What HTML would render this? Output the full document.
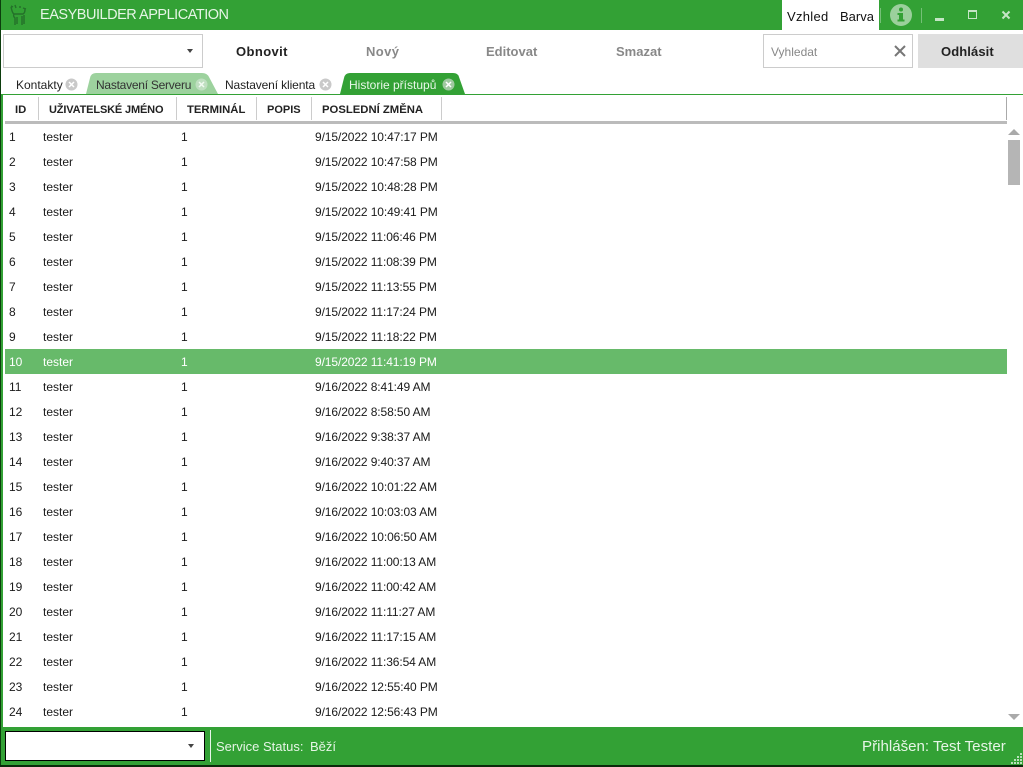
<!DOCTYPE html>
<html><head><meta charset="utf-8"><style>
html,body{margin:0;padding:0;background:#fff}
#a{position:relative;width:1023px;height:767px;overflow:hidden;background:#fff;font-family:"Liberation Sans",sans-serif;font-size:12px;color:#1a1a1a}
.t{position:absolute;white-space:nowrap;line-height:16px}
.b{position:absolute;background:#33a135}
.h{font-weight:bold;font-size:11.3px;color:#222;top:102px}
.btn{font-weight:bold;font-size:13px;top:44px;color:#888}
.s{position:absolute;width:1px;height:23px;top:97px;background:#ccc}
.r{position:absolute;left:5px;width:1002px;height:25px}
.r span{position:absolute;top:5px;line-height:16px;white-space:nowrap}
.c1{left:4px}.c2{left:38px}.c3{left:176px}.c4{left:310px;letter-spacing:-.1px}
.sel{background:#67ba6a;color:#fff}
</style></head><body><div id="a">
<div class="b" style="left:0;top:0;width:1023px;height:30px"></div>
<svg style="position:absolute;left:9px;top:4px" width="20" height="22" viewBox="0 0 20 22" fill="none" stroke="#24702a" stroke-width="1.400"><path d="M2 3c1 3 1 6 3 7h9c2-1 2-3 2-6M5 10c-1 2 0 3 1 4v7M8 13v7M13 12v9M15 11v9M14 4l3 1M2 2l2 1M6 1l1 3M10 3h2"/></svg>
<div class="t" style="left:40px;top:7px;font-size:14.5px;letter-spacing:-.48px;color:#e6f5e6">EASYBUILDER APPLICATION</div>
<div style="position:absolute;left:782px;top:0;width:97px;height:30px;background:#fff"></div>
<div class="t" style="left:787px;top:9px;font-size:13px;letter-spacing:.3px;color:#111">Vzhled</div>
<div class="t" style="left:840px;top:9px;font-size:13px;color:#111">Barva</div>
<div style="position:absolute;left:880px;top:8px;width:1px;height:15px;background:#75c077"></div>
<div style="position:absolute;left:921px;top:8px;width:1px;height:15px;background:#75c077"></div>
<svg style="position:absolute;left:890px;top:4px" width="22" height="22" viewBox="0 0 22 22"><circle cx="11" cy="11" r="11" fill="#9bd09c"/><rect x="9" y="9" width="4" height="8" fill="#33a135"/><rect x="7.500" y="9" width="5" height="2" fill="#33a135"/><rect x="7.500" y="15.500" width="7" height="2" fill="#33a135"/><circle cx="11" cy="5.500" r="2" fill="#33a135"/></svg>
<svg style="position:absolute;left:930px;top:6px" width="90" height="20" viewBox="0 0 90 20" fill="none" stroke="#c5e5c6"><path d="M5.500 12.500h8v2h-8z" fill="#c5e5c6"/><path d="M38.500 4.500h8v8h-8z"/><path d="M38 5h9" stroke-width="2"/><path d="M72.500 5.500l7 7M79.500 5.500l-7 7" stroke-width="2"/></svg>

<div style="position:absolute;left:3px;top:34px;width:198px;height:32px;border:1px solid #ccc"></div>
<div style="position:absolute;left:187px;top:49px;border-left:3px solid transparent;border-right:3px solid transparent;border-top:4px solid #444"></div>
<div class="t btn" style="left:236px;color:#222;letter-spacing:.4px">Obnovit</div>
<div class="t btn" style="left:366px;letter-spacing:.4px">Nový</div>
<div class="t btn" style="left:486px">Editovat</div>
<div class="t btn" style="left:616px">Smazat</div>
<div style="position:absolute;left:763px;top:34px;width:148px;height:32px;border:1px solid #ccc"></div>
<div class="t" style="left:771px;top:44px;color:#888">Vyhledat</div>
<svg style="position:absolute;left:893px;top:44px" width="14" height="14" fill="none" stroke="#777" stroke-width="2"><path d="M2 2l10 10M12 2L2 12"/></svg>
<div style="position:absolute;left:918px;top:34px;width:105px;height:34px;background:#dfdfdf"></div>
<div class="t btn" style="left:941px;color:#222;letter-spacing:.1px">Odhlásit</div>

<svg style="position:absolute;left:0;top:72px" width="480" height="24"><path d="M86 22l4-16q1-5 6-5h106q5 0 7 4l9 17z" fill="#9dd29e"/><path d="M340 22l4-16q1-5 6-5h103q5 0 6 4l6 17z" fill="#33a135"/></svg>
<div class="t" style="left:16px;top:77px;color:#222">Kontakty</div>
<div class="t" style="left:96px;top:77px;letter-spacing:-.25px;color:#333">Nastavení Serveru</div>
<div class="t" style="left:225px;top:77px;letter-spacing:-.12px;color:#222">Nastavení klienta</div>
<div class="t" style="left:349px;top:77px;color:#e9f7e9">Historie přístupů</div>
<svg style="position:absolute;left:65px;top:78px" width="14" height="14" fill="none"><circle cx="6.500" cy="6.500" r="6" fill="#c9c9c9"/><path d="M4 4l5 5M9 4l-5 5" stroke="#fff" stroke-width="1.500"/></svg>
<svg style="position:absolute;left:195px;top:78px" width="14" height="14" fill="none"><circle cx="6.500" cy="6.500" r="6" fill="#bfdfc0"/><path d="M4 4l5 5M9 4l-5 5" stroke="#f2faf2" stroke-width="1.500"/></svg>
<svg style="position:absolute;left:319px;top:78px" width="14" height="14" fill="none"><circle cx="6.500" cy="6.500" r="6" fill="#c9c9c9"/><path d="M4 4l5 5M9 4l-5 5" stroke="#fff" stroke-width="1.500"/></svg>
<svg style="position:absolute;left:442px;top:78px" width="14" height="14" fill="none"><circle cx="6.500" cy="6.500" r="6" fill="#9fc9a0"/><path d="M4 4l5 5M9 4l-5 5" stroke="#fff" stroke-width="1.500"/></svg>

<div class="b" style="left:1px;top:94px;width:1022px;height:1px"></div>
<div class="b" style="left:1px;top:94px;width:2px;height:640px"></div>
<div style="position:absolute;left:0;top:0;width:1px;height:767px;background:#0c3d0d"></div>

<div class="t h" style="left:15px">ID</div>
<div class="t h" style="left:49px;letter-spacing:-.15px;font-size:11px">UŽIVATELSKÉ JMÉNO</div>
<div class="t h" style="left:187px">TERMINÁL</div>
<div class="t h" style="left:267px;font-size:11px">POPIS</div>
<div class="t h" style="left:322px">POSLEDNÍ ZMĚNA</div>
<div class="s" style="left:38px"></div><div class="s" style="left:176px"></div><div class="s" style="left:256px"></div><div class="s" style="left:311px"></div><div class="s" style="left:441px"></div><div class="s" style="left:1006px;background:#aaa"></div>
<div style="position:absolute;left:5px;top:121px;width:1002px;height:3px;background:#bbb"></div>

<div class="r" style="top:124px"><span class="c1">1</span><span class="c2">tester</span><span class="c3">1</span><span class="c4">9/15/2022 10:47:17 PM</span></div>
<div class="r" style="top:149px"><span class="c1">2</span><span class="c2">tester</span><span class="c3">1</span><span class="c4">9/15/2022 10:47:58 PM</span></div>
<div class="r" style="top:174px"><span class="c1">3</span><span class="c2">tester</span><span class="c3">1</span><span class="c4">9/15/2022 10:48:28 PM</span></div>
<div class="r" style="top:199px"><span class="c1">4</span><span class="c2">tester</span><span class="c3">1</span><span class="c4">9/15/2022 10:49:41 PM</span></div>
<div class="r" style="top:224px"><span class="c1">5</span><span class="c2">tester</span><span class="c3">1</span><span class="c4">9/15/2022 11:06:46 PM</span></div>
<div class="r" style="top:249px"><span class="c1">6</span><span class="c2">tester</span><span class="c3">1</span><span class="c4">9/15/2022 11:08:39 PM</span></div>
<div class="r" style="top:274px"><span class="c1">7</span><span class="c2">tester</span><span class="c3">1</span><span class="c4">9/15/2022 11:13:55 PM</span></div>
<div class="r" style="top:299px"><span class="c1">8</span><span class="c2">tester</span><span class="c3">1</span><span class="c4">9/15/2022 11:17:24 PM</span></div>
<div class="r" style="top:324px"><span class="c1">9</span><span class="c2">tester</span><span class="c3">1</span><span class="c4">9/15/2022 11:18:22 PM</span></div>
<div class="r sel" style="top:349px"><span class="c1">10</span><span class="c2">tester</span><span class="c3">1</span><span class="c4">9/15/2022 11:41:19 PM</span></div>
<div class="r" style="top:374px"><span class="c1">11</span><span class="c2">tester</span><span class="c3">1</span><span class="c4">9/16/2022 8:41:49 AM</span></div>
<div class="r" style="top:399px"><span class="c1">12</span><span class="c2">tester</span><span class="c3">1</span><span class="c4">9/16/2022 8:58:50 AM</span></div>
<div class="r" style="top:424px"><span class="c1">13</span><span class="c2">tester</span><span class="c3">1</span><span class="c4">9/16/2022 9:38:37 AM</span></div>
<div class="r" style="top:449px"><span class="c1">14</span><span class="c2">tester</span><span class="c3">1</span><span class="c4">9/16/2022 9:40:37 AM</span></div>
<div class="r" style="top:474px"><span class="c1">15</span><span class="c2">tester</span><span class="c3">1</span><span class="c4">9/16/2022 10:01:22 AM</span></div>
<div class="r" style="top:499px"><span class="c1">16</span><span class="c2">tester</span><span class="c3">1</span><span class="c4">9/16/2022 10:03:03 AM</span></div>
<div class="r" style="top:524px"><span class="c1">17</span><span class="c2">tester</span><span class="c3">1</span><span class="c4">9/16/2022 10:06:50 AM</span></div>
<div class="r" style="top:549px"><span class="c1">18</span><span class="c2">tester</span><span class="c3">1</span><span class="c4">9/16/2022 11:00:13 AM</span></div>
<div class="r" style="top:574px"><span class="c1">19</span><span class="c2">tester</span><span class="c3">1</span><span class="c4">9/16/2022 11:00:42 AM</span></div>
<div class="r" style="top:599px"><span class="c1">20</span><span class="c2">tester</span><span class="c3">1</span><span class="c4">9/16/2022 11:11:27 AM</span></div>
<div class="r" style="top:624px"><span class="c1">21</span><span class="c2">tester</span><span class="c3">1</span><span class="c4">9/16/2022 11:17:15 AM</span></div>
<div class="r" style="top:649px"><span class="c1">22</span><span class="c2">tester</span><span class="c3">1</span><span class="c4">9/16/2022 11:36:54 AM</span></div>
<div class="r" style="top:674px"><span class="c1">23</span><span class="c2">tester</span><span class="c3">1</span><span class="c4">9/16/2022 12:55:40 PM</span></div>
<div class="r" style="top:699px"><span class="c1">24</span><span class="c2">tester</span><span class="c3">1</span><span class="c4">9/16/2022 12:56:43 PM</span></div>

<div style="position:absolute;left:1008px;top:129px;border-left:6px solid transparent;border-right:6px solid transparent;border-bottom:6px solid #aaa"></div>
<div style="position:absolute;left:1008px;top:140px;width:12px;height:45px;background:#b5b5b5"></div>
<div style="position:absolute;left:1008px;top:714px;border-left:6px solid transparent;border-right:6px solid transparent;border-top:6px solid #aaa"></div>

<div class="b" style="left:1px;top:727px;width:1022px;height:38px"></div>
<div style="position:absolute;left:0;top:765px;width:1023px;height:2px;background:#0a2a0a"></div>
<div style="position:absolute;left:5px;top:731px;width:198px;height:28px;background:#fff;border:1px solid #000"></div>
<div style="position:absolute;left:188px;top:744px;border-left:3px solid transparent;border-right:3px solid transparent;border-top:4px solid #444"></div>
<div style="position:absolute;left:210px;top:730px;width:1px;height:32px;background:#e8f5e8"></div>
<div class="t" style="left:216px;top:739px;font-size:13px;color:#e6f5e6">Service Status:</div>
<div class="t" style="left:310px;top:739px;font-size:13px;color:#e6f5e6">Běží</div>
<div class="t" style="left:862px;top:739px;font-size:15.100px;color:#e6f5e6">Přihlášen: Test Tester</div>
<svg style="position:absolute;left:1011px;top:751px" width="12" height="14" fill="#b9dfba"><rect x="9" y="2" width="2" height="2"/><rect x="9" y="5" width="2" height="2"/><rect x="6" y="5" width="2" height="2"/><rect x="9" y="8" width="2" height="2"/><rect x="6" y="8" width="2" height="2"/><rect x="3" y="8" width="2" height="2"/><rect x="9" y="11" width="2" height="2"/><rect x="6" y="11" width="2" height="2"/><rect x="3" y="11" width="2" height="2"/><rect x="0" y="11" width="2" height="2"/></svg>
</div></body></html>
